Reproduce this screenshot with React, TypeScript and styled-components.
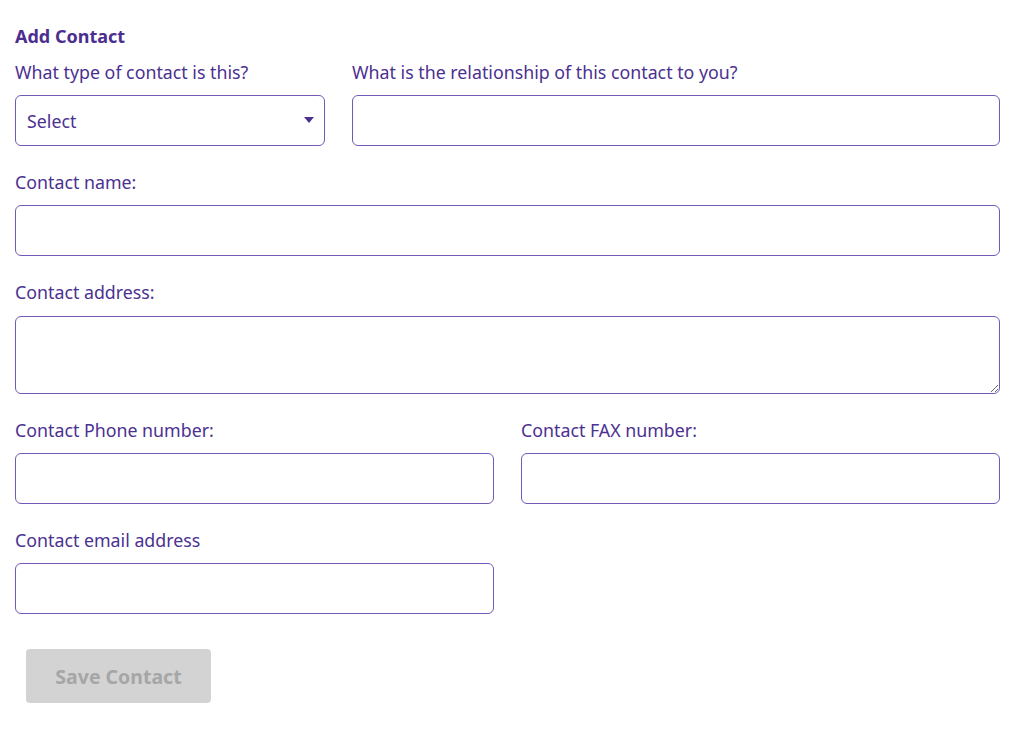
import React from "react"
import styled, { createGlobalStyle } from "styled-components"

const GlobalStyle = createGlobalStyle`
  body {
    margin: 0;
    background: #fff;
    font-family: "Noto Sans", "Open Sans", sans-serif;
  }
`

const Page = styled.div`
  padding: 24px 24px 30px 15px;
`

const Title = styled.h3`
  margin: 0 0 12px;
  font-size: 18px;
  line-height: 24px;
  font-weight: 700;
  color: #4b2e8f;
`

const Form = styled.form`
  display: flex;
  flex-direction: column;
  gap: 24px;
`

const Row = styled.div<{ $cols: string }>`
  display: grid;
  grid-template-columns: ${(p) => p.$cols};
  column-gap: 27px;
`

const Field = styled.div`
  display: flex;
  flex-direction: column;
`

const Label = styled.label`
  font-size: 17.8px;
  line-height: 24px;
  color: #4b3190;
  margin-bottom: 11px;
`

const Input = styled.input`
  box-sizing: border-box;
  height: 51px;
  width: 100%;
  border: 1.5px solid #7259b8;
  border-radius: 6px;
  padding: 0 12px;
  font: inherit;
  font-size: 17.8px;
  color: #4b3190;
  outline: none;
`

const TextArea = styled.textarea`
  box-sizing: border-box;
  height: 78px;
  width: 100%;
  margin-top: 1px;
  border: 1.5px solid #7259b8;
  border-radius: 6px;
  padding: 10px 12px;
  font: inherit;
  font-size: 17.8px;
  outline: none;
  resize: vertical;
  display: block;
`

const SelectBox = styled.div`
  position: relative;
`

const Select = styled.select`
  appearance: none;
  box-sizing: border-box;
  height: 51px;
  width: 100%;
  border: 1.5px solid #7259b8;
  border-radius: 6px;
  padding: 0 11px;
  background: #fff;
  font: inherit;
  font-size: 17.8px;
  color: #4b3190;
  outline: none;
`

const Caret = styled.svg`
  position: absolute;
  right: 11px;
  top: 22px;
  pointer-events: none;
`

const Button = styled.button`
  margin: 11px 0 0 11px;
  width: 185px;
  height: 54px;
  border: none;
  border-radius: 4px;
  background: #d3d3d3;
  color: #a6a6a6;
  font-family: "Noto Sans", "Open Sans", sans-serif;
  font-size: 19.5px;
  font-weight: 700;
  align-self: flex-start;
`

const App = (): JSX.Element => {
  return (
    <Page>
      <GlobalStyle />
      <Title>Add Contact</Title>
      <Form onSubmit={(e) => e.preventDefault()}>
        <Row $cols="310px 1fr">
          <Field>
            <Label>What type of contact is this?</Label>
            <SelectBox>
              <Select defaultValue="">
                <option value="">Select</option>
              </Select>
              <Caret width="10" height="6" viewBox="0 0 10 6">
                <path d="M0 0 L10 0 L5 6 Z" fill="#4b3190" />
              </Caret>
            </SelectBox>
          </Field>
          <Field>
            <Label>What is the relationship of this contact to you?</Label>
            <Input />
          </Field>
        </Row>
        <Field>
          <Label>Contact name:</Label>
          <Input />
        </Field>
        <Field>
          <Label>Contact address:</Label>
          <TextArea />
        </Field>
        <Row $cols="1fr 1fr">
          <Field>
            <Label>Contact Phone number:</Label>
            <Input />
          </Field>
          <Field>
            <Label>Contact FAX number:</Label>
            <Input />
          </Field>
        </Row>
        <Row $cols="1fr 1fr">
          <Field>
            <Label>Contact email address</Label>
            <Input />
          </Field>
        </Row>
        <Button type="submit" disabled>
          Save Contact
        </Button>
      </Form>
    </Page>
  )
}

export default App
